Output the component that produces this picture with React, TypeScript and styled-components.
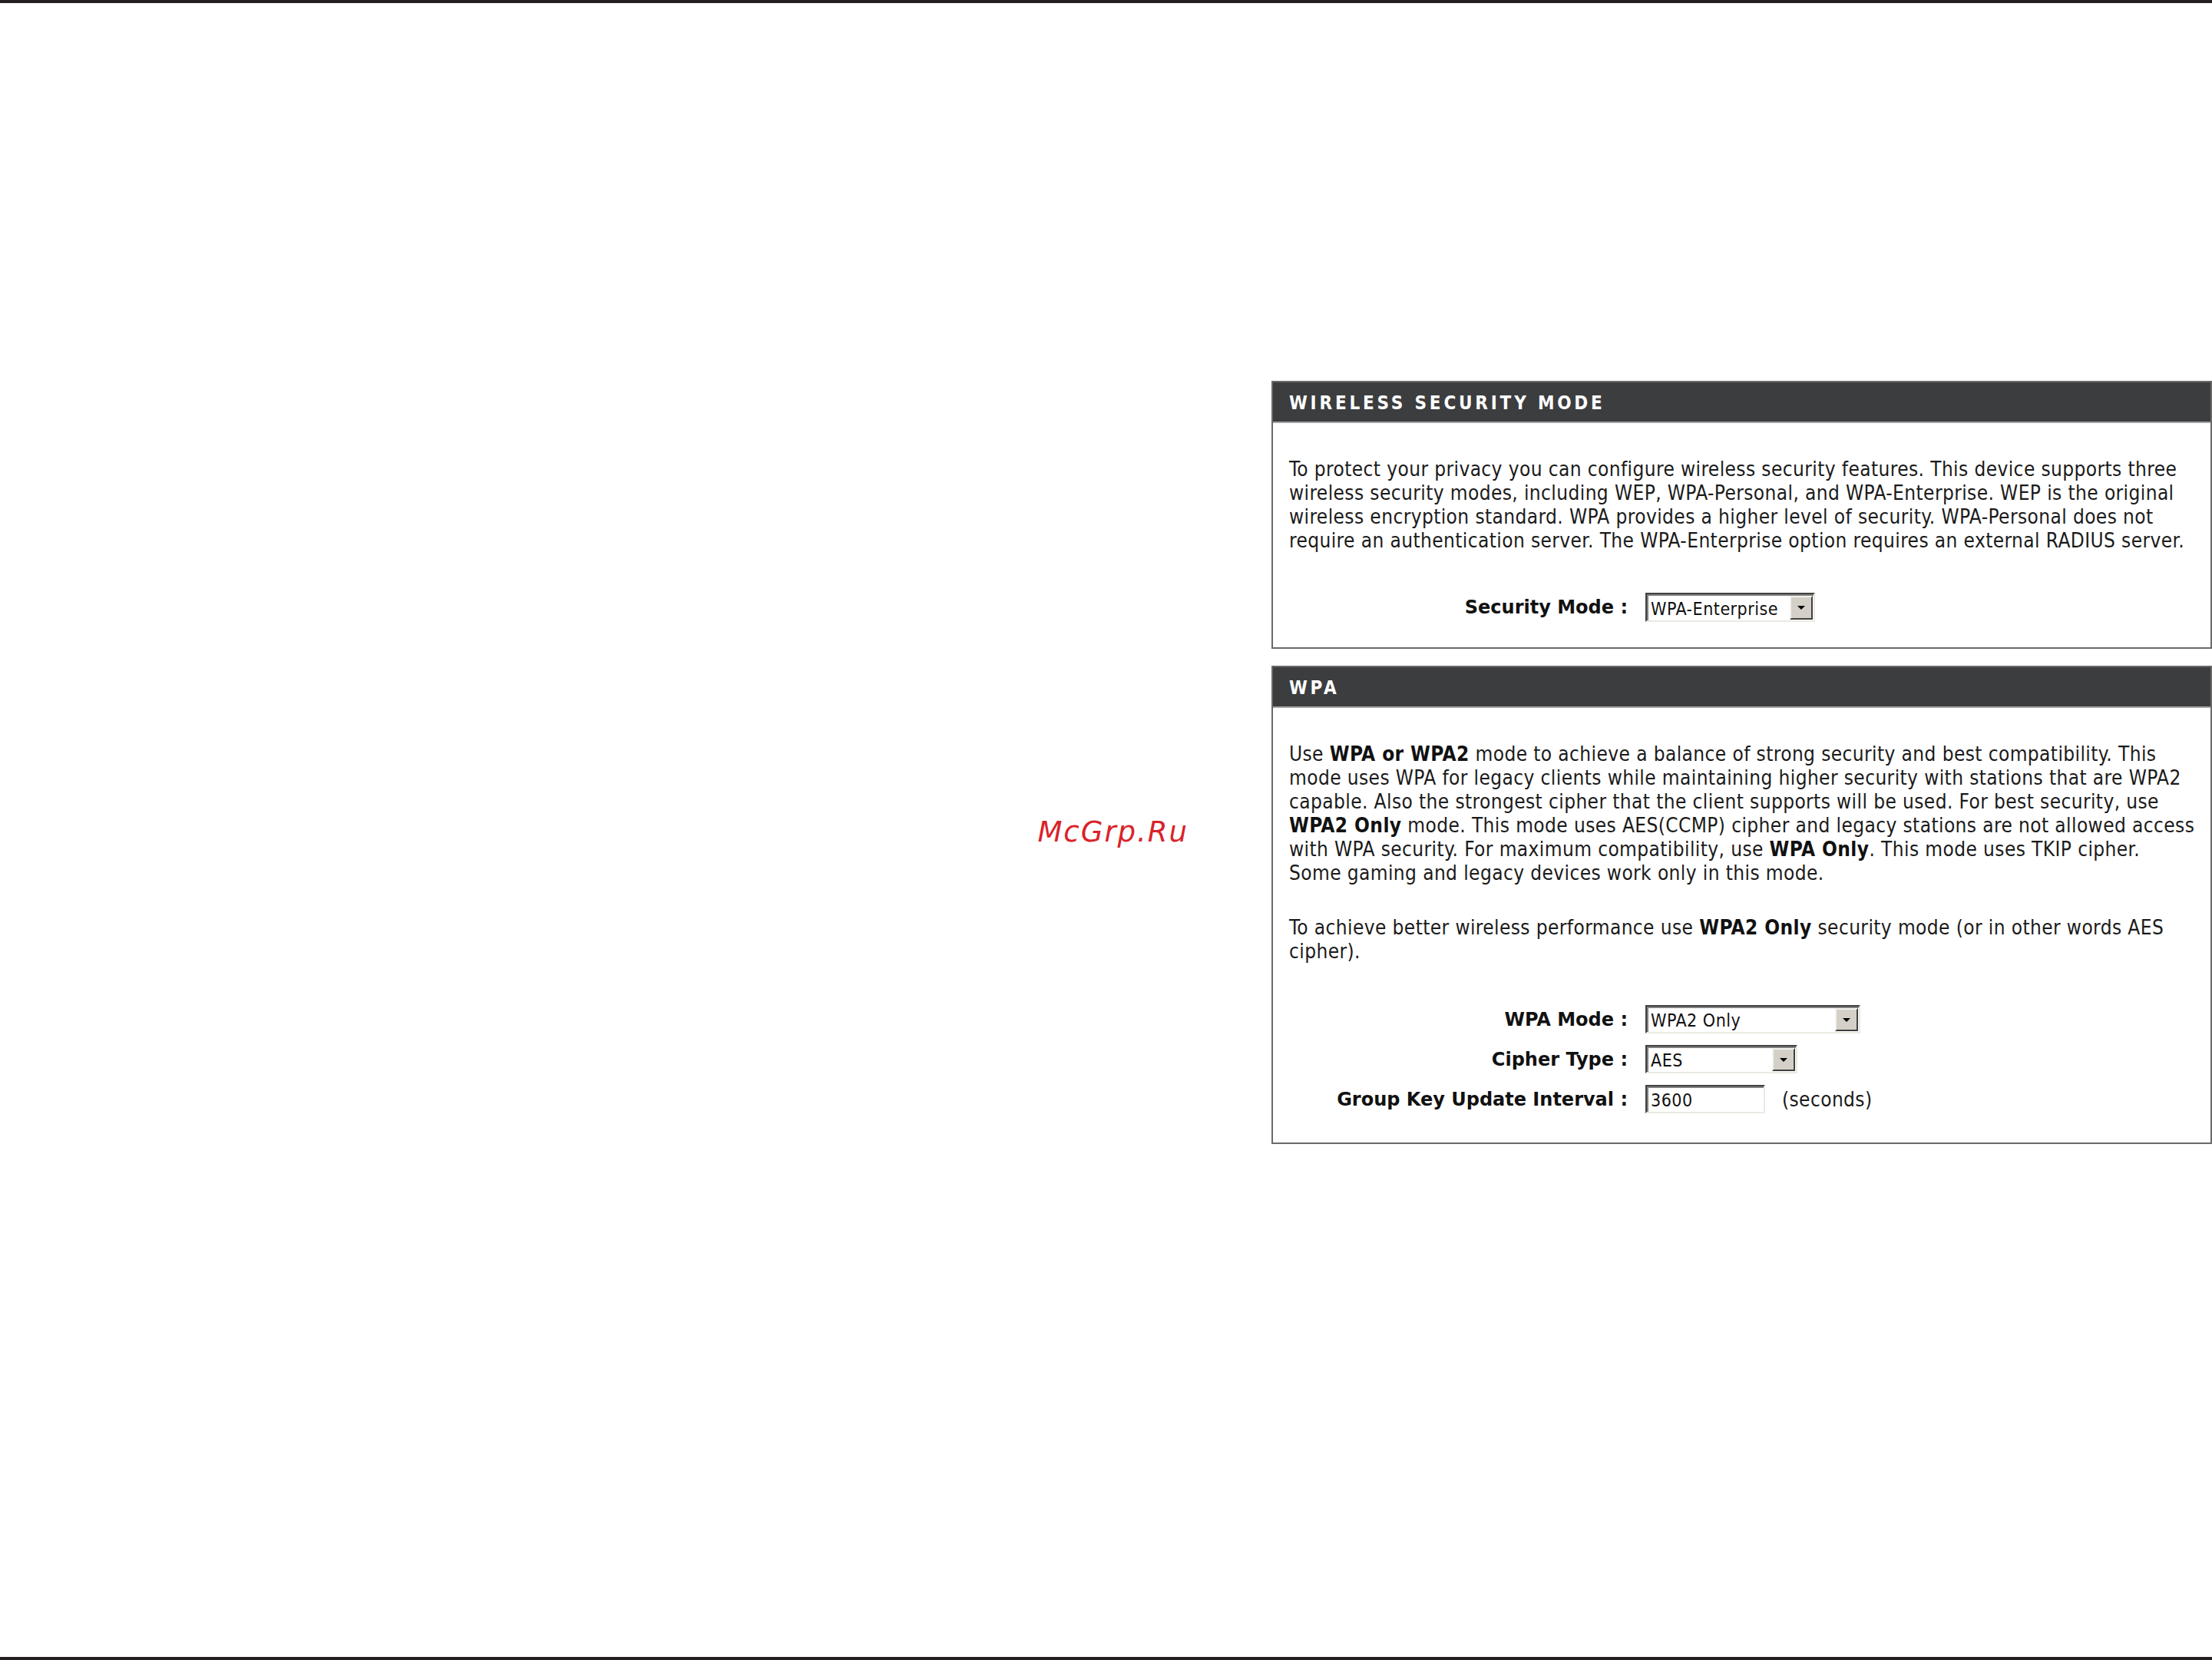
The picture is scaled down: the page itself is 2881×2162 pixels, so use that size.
import React from 'react';
import styled, { createGlobalStyle } from 'styled-components';

const GlobalStyle = createGlobalStyle`
  html,
  body {
    margin: 0;
    padding: 0;
    background: #ffffff;
  }
  body {
    font-family: 'DejaVu Sans Condensed', 'DejaVu Sans', sans-serif;
  }
`;

// page frame: thin dark rules top and bottom
const Page = styled.div`
  width: 2881px;
  height: 2162px;
  box-sizing: border-box;
  border-top: 4px solid #231f20;
  border-bottom: 4px solid #231f20;
  display: flex;
  flex-direction: column;
`;

const Content = styled.main`
  flex: 1;
  display: grid;
  grid-template-columns: 1fr 1225px;
  padding-top: 492px;
`;

const Margin = styled.div`
  display: flex;
  justify-content: flex-end;
  align-items: flex-start;
  padding-top: 566px;
  padding-right: 108px;
`;

const Stamp = styled.div`
  font-family: 'DejaVu Sans', sans-serif;
  font-style: oblique;
  font-size: 37px;
  line-height: 44px;
  letter-spacing: 2px;
  color: #d9232a;
`;

const Column = styled.div`
  display: flex;
  flex-direction: column;
  gap: 22px;
`;

const Panel = styled.section`
  border: 2px solid #6a6a6a;
`;

const PanelHeader = styled.h2`
  margin: 0;
  height: 53px;
  box-sizing: border-box;
  display: flex;
  align-items: center;
  padding: 3px 0 0 21px;
  background: #3c3d3f;
  border-bottom: 2px solid #a3a3a3;
  color: #ffffff;
  font-size: 24px;
  font-weight: bold;
  letter-spacing: 3.8px;
`;

const PanelBody = styled.div<{ $bottom: number }>`
  padding: 45px 20px ${(p) => p.$bottom}px 21px;
`;

const Para = styled.p`
  margin: 0;
  font-size: 26px;
  line-height: 31px;
  letter-spacing: 0.4px;
  color: #1b1b1b;
  white-space: nowrap;
  & + & {
    margin-top: 40px;
  }
  b {
    color: #111;
  }
`;

const FormGrid = styled.div<{ $top: number }>`
  display: grid;
  grid-template-columns: 441px auto;
  column-gap: 23px;
  row-gap: 15px;
  align-items: center;
  margin-top: ${(p) => p.$top}px;
`;

const Label = styled.label`
  text-align: right;
  font-family: 'DejaVu Sans', sans-serif;
  font-weight: bold;
  font-size: 24px;
  color: #111;
  white-space: nowrap;
`;

const Field = styled.div`
  display: flex;
  align-items: center;
  gap: 22px;
`;

const SunkenBox = styled.div<{ $width: number; $height: number }>`
  width: ${(p) => p.$width}px;
  height: ${(p) => p.$height}px;
  box-sizing: border-box;
  display: flex;
  align-items: stretch;
  background: #ffffff;
  border-style: solid;
  border-width: 2px;
  border-color: #404040 #ebe9e2 #ebe9e2 #404040;
  box-shadow: inset 2px 2px 0 #808080;
  font-size: 23px;
  letter-spacing: 0.5px;
  color: #111;
`;

const BoxValue = styled.span`
  flex: 1;
  display: flex;
  align-items: center;
  padding: 3px 0 0 5px;
  white-space: nowrap;
  overflow: hidden;
`;

const DropButton = styled.span`
  width: 30px;
  flex: none;
  margin: 2px 1px 1px 0;
  box-sizing: border-box;
  display: flex;
  align-items: center;
  justify-content: center;
  background: #d4d0c8;
  border-style: solid;
  border-width: 2px;
  border-color: #f4f3ee #404040 #404040 #f4f3ee;
  &::after {
    content: '';
    border-left: 5px solid transparent;
    border-right: 5px solid transparent;
    border-top: 5px solid #000;
  }
`;

const Units = styled.span`
  font-size: 26px;
  letter-spacing: 0.4px;
  color: #1b1b1b;
`;

type SelectProps = { value: string; width: number; height?: number };

const FakeSelect = ({ value, width, height = 38 }: SelectProps) => (
  <SunkenBox $width={width} $height={height}>
    <BoxValue>{value}</BoxValue>
    <DropButton />
  </SunkenBox>
);

const App = () => (
  <>
    <GlobalStyle />
    <Page>
      <Content>
        <Margin>
          <Stamp>McGrp.Ru</Stamp>
        </Margin>
        <Column>
          <Panel>
            <PanelHeader>WIRELESS SECURITY MODE</PanelHeader>
            <PanelBody $bottom={33}>
              <Para>
                To protect your privacy you can configure wireless security features. This device supports three
                <br />
                wireless security modes, including WEP, WPA-Personal, and WPA-Enterprise. WEP is the original
                <br />
                wireless encryption standard. WPA provides a higher level of security. WPA-Personal does not
                <br />
                require an authentication server. The WPA-Enterprise option requires an external RADIUS server.
              </Para>
              <FormGrid $top={52}>
                <Label>Security Mode :</Label>
                <Field>
                  <FakeSelect value="WPA-Enterprise" width={221} />
                </Field>
              </FormGrid>
            </PanelBody>
          </Panel>

          <Panel>
            <PanelHeader>WPA</PanelHeader>
            <PanelBody $bottom={38}>
              <Para>
                Use <b>WPA or WPA2</b> mode to achieve a balance of strong security and best compatibility. This
                <br />
                mode uses WPA for legacy clients while maintaining higher security with stations that are WPA2
                <br />
                capable. Also the strongest cipher that the client supports will be used. For best security, use
                <br />
                <b>WPA2 Only</b> mode. This mode uses AES(CCMP) cipher and legacy stations are not allowed access
                <br />
                with WPA security. For maximum compatibility, use <b>WPA Only</b>. This mode uses TKIP cipher.
                <br />
                Some gaming and legacy devices work only in this mode.
              </Para>
              <Para>
                To achieve better wireless performance use <b>WPA2 Only</b> security mode (or in other words AES
                <br />
                cipher).
              </Para>
              <FormGrid $top={54}>
                <Label>WPA Mode :</Label>
                <Field>
                  <FakeSelect value="WPA2 Only" width={280} height={37} />
                </Field>
                <Label>Cipher Type :</Label>
                <Field>
                  <FakeSelect value="AES" width={198} height={37} />
                </Field>
                <Label>Group Key Update Interval :</Label>
                <Field>
                  <SunkenBox $width={156} $height={37}>
                    <BoxValue>3600</BoxValue>
                  </SunkenBox>
                  <Units>(seconds)</Units>
                </Field>
              </FormGrid>
            </PanelBody>
          </Panel>
        </Column>
      </Content>
    </Page>
  </>
);

export default App;
